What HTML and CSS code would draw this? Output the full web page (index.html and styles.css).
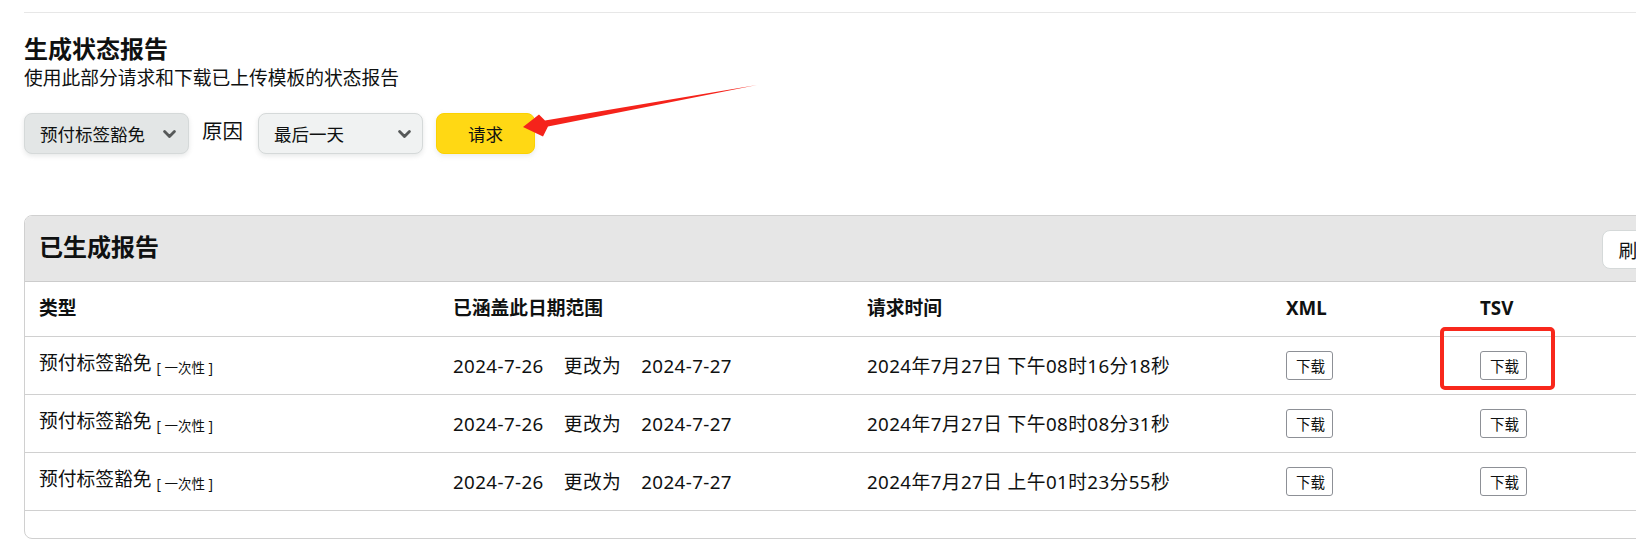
FILE: index.html
```html
<!DOCTYPE html>
<html lang="zh-CN">
<head>
<meta charset="utf-8">
<title>生成状态报告</title>
<link rel="stylesheet" href="styles.css">
</head>
<body>
<div class="page">
  <div class="topline"></div>
  <section class="gen">
    <h1 class="title">生成状态报告</h1>
    <p class="subtitle">使用此部分请求和下载已上传模板的状态报告</p>
    <div class="controls">
      <div class="select select-active">
        <span class="select-text">预付标签豁免</span>
        <svg class="chev" width="13" height="9" viewBox="0 0 13 9"><path d="M1.6 1.6 L6.5 6.6 L11.4 1.6" fill="none" stroke="#565959" stroke-width="2.8" stroke-linecap="round" stroke-linejoin="round"/></svg>
      </div>
      <span class="label">原因</span>
      <div class="select">
        <span class="select-text">最后一天</span>
        <svg class="chev" width="13" height="9" viewBox="0 0 13 9"><path d="M1.6 1.6 L6.5 6.6 L11.4 1.6" fill="none" stroke="#565959" stroke-width="2.8" stroke-linecap="round" stroke-linejoin="round"/></svg>
      </div>
      <button class="btn-primary">请求</button>
    </div>
  </section>

  <section class="card">
    <div class="card-head">
      <h2 class="card-title">已生成报告</h2>
      <button class="btn-refresh">刷新</button>
    </div>
    <div class="row row-head">
      <div class="cell">类型</div>
      <div class="cell">已涵盖此日期范围</div>
      <div class="cell">请求时间</div>
      <div class="cell">XML</div>
      <div class="cell">TSV</div>
    </div>
    <div class="row">
      <div class="cell">预付标签豁免<span class="tag">[ 一次性 ]</span></div>
      <div class="cell wide"><span class="d">2024-7-26</span><span class="d">更改为</span><span>2024-7-27</span></div>
      <div class="cell wide">2024年7月27日 下午08时16分18秒</div>
      <div class="cell"><button class="btn-dl">下载</button></div>
      <div class="cell"><button class="btn-dl">下载</button></div>
    </div>
    <div class="row">
      <div class="cell">预付标签豁免<span class="tag">[ 一次性 ]</span></div>
      <div class="cell wide"><span class="d">2024-7-26</span><span class="d">更改为</span><span>2024-7-27</span></div>
      <div class="cell wide">2024年7月27日 下午08时08分31秒</div>
      <div class="cell"><button class="btn-dl">下载</button></div>
      <div class="cell"><button class="btn-dl">下载</button></div>
    </div>
    <div class="row">
      <div class="cell">预付标签豁免<span class="tag">[ 一次性 ]</span></div>
      <div class="cell wide"><span class="d">2024-7-26</span><span class="d">更改为</span><span>2024-7-27</span></div>
      <div class="cell wide">2024年7月27日 上午01时23分55秒</div>
      <div class="cell"><button class="btn-dl">下载</button></div>
      <div class="cell"><button class="btn-dl">下载</button></div>
    </div>
    <div class="card-foot"></div>
  </section>
</div>

<div class="highlight"></div>
<svg class="arrow" width="1636" height="556" viewBox="0 0 1636 556">
  <polygon points="523,127 539,114.5 545,120.5 757,85 548,126.5 543,136.5" fill="#f5231b"/>
</svg>
</body>
</html>
```
FILE: styles.css
```css
html, body {
  margin: 0;
  padding: 0;
  overflow: hidden;
  background: #ffffff;
}

body {
  font-family: "Noto Sans", "Noto Sans CJK SC", sans-serif;
  color: #0f1111;
  width: 1636px;
  height: 556px;
  position: relative;
}

.page {
  padding-left: 24px;
  padding-top: 12px;
}

.topline {
  height: 1px;
  background: #e7e7e7;
  width: 1700px;
}

.title {
  margin: 21px 0 0 0;
  font-size: 24px;
  line-height: 30px;
  font-weight: 700;
}

.subtitle {
  margin: 1px 0 0 0;
  font-size: 18.75px;
  line-height: 26px;
}

.controls {
  margin-top: 22px;
  display: flex;
  align-items: center;
  gap: 13px;
  height: 41px;
}

.select {
  box-sizing: border-box;
  width: 165px;
  height: 41px;
  border: 1px solid #d5d9d9;
  border-radius: 8px;
  background: #f0f2f2;
  box-shadow: 0 2px 5px 0 rgba(213, 217, 217, 0.6);
  display: flex;
  align-items: center;
  justify-content: space-between;
  padding: 0 11px 0 15px;
}

.select-active {
  background: #e3e6e6;
  padding-right: 12px;
}

.select-text {
  font-size: 17.5px;
  line-height: 24px;
}

.chev {
  display: block;
  margin-top: 1px;
}

.label {
  font-size: 20.5px;
  line-height: 28px;
  margin-right: 2px;
  margin-top: -6px;
}

.btn-primary {
  box-sizing: border-box;
  width: 99px;
  height: 41px;
  border: 1px solid #fcd200;
  border-radius: 8px;
  background: #ffd814;
  color: #0f1111;
  font-family: inherit;
  font-size: 17.5px;
  padding: 0;
  box-shadow: 0 2px 5px 0 rgba(213, 217, 217, 0.5);
}

.card {
  margin-top: 61px;
  box-sizing: border-box;
  width: 1664px;
  border: 1px solid #d0d0d0;
  border-radius: 8px;
  overflow: hidden;
}

.card-head {
  box-sizing: border-box;
  height: 66px;
  background: #e6e6e6;
  border-bottom: 1px solid #cccccc;
  display: flex;
  align-items: center;
  justify-content: space-between;
  padding: 0 14px;
}

.card-title {
  margin: 0;
  font-size: 24px;
  line-height: 30px;
  font-weight: 700;
  margin-top: -4px;
}

.btn-refresh {
  box-sizing: border-box;
  height: 39px;
  padding: 0 16px;
  background: #ffffff;
  border: 1px solid #d5d9d9;
  border-radius: 8px;
  font-family: inherit;
  font-size: 18.75px;
  color: #0f1111;
  margin-top: 2px;
}

.row {
  box-sizing: border-box;
  display: grid;
  grid-template-columns: 414px 414px 419px 194px 1fr;
  align-items: center;
  height: 58px;
  border-bottom: 1px solid #d0d0d0;
  font-size: 18.75px;
  line-height: 26px;
}

.row-head {
  height: 55px;
  font-weight: 700;
}

.cell {
  padding-left: 14px;
  white-space: nowrap;
}

.wide {
  letter-spacing: 0.4px;
}

.row-head .cell {
  margin-top: -2px;
}

.tag {
  font-size: 13.5px;
  margin-left: 5px;
  vertical-align: -3px;
}

.d {
  margin-right: 20px;
}

.btn-dl {
  box-sizing: border-box;
  width: 47px;
  height: 29px;
  padding: 0 0 0 2px;
  background: #ffffff;
  border: 1px solid #8d9096;
  border-radius: 3px;
  font-family: inherit;
  font-size: 14.5px;
  color: #0f1111;
  display: block;
}

.card-foot {
  height: 27px;
}

.highlight {
  position: absolute;
  left: 1440px;
  top: 327px;
  width: 115px;
  height: 63px;
  box-sizing: border-box;
  border: 4px solid #f8281c;
  border-radius: 5px;
}

.arrow {
  position: absolute;
  left: 0;
  top: 0;
  pointer-events: none;
}
```
